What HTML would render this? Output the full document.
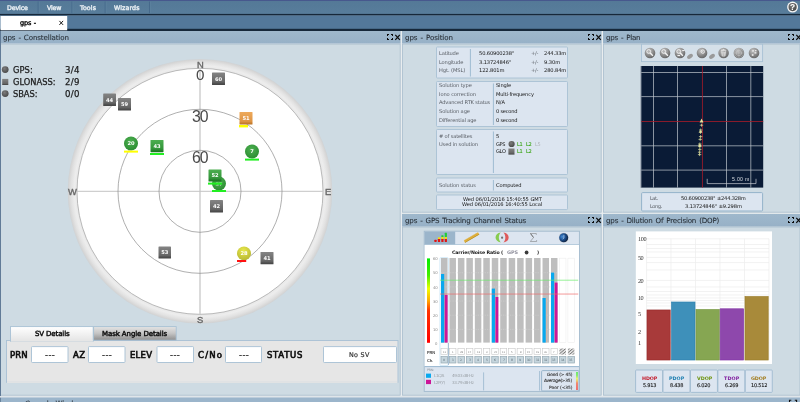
<!DOCTYPE html>
<html lang="en">
<head>
<meta charset="utf-8">
<title>gps</title>
<style>
html,body{margin:0;padding:0}
body{width:800px;height:402px;overflow:hidden;background:#cedbe3;position:relative;font-family:'DejaVu Sans','Liberation Sans',sans-serif}
#app{position:absolute;left:0;top:0;width:800px;height:402px;overflow:hidden}
#g{position:absolute;left:0;top:0;will-change:transform}
.t{position:absolute;white-space:pre;will-change:transform;font-family:'DejaVu Sans','Liberation Sans',sans-serif}
.l{font-family:'Liberation Sans','DejaVu Sans',sans-serif}
.s{font-family:'Liberation Serif','DejaVu Serif',serif}
</style>
</head>
<body>
<div id="app">
<svg id="g" width="800" height="402" viewBox="0 0 800 402">
<defs>
<linearGradient id="gTitle" x1="0" y1="0" x2="0" y2="1"><stop offset="0" stop-color="#9fb8cc"/><stop offset="1" stop-color="#97b1c7"/></linearGradient>
<linearGradient id="gMenu" x1="0" y1="0" x2="0" y2="1"><stop offset="0" stop-color="#547997"/><stop offset="1" stop-color="#587d9b"/></linearGradient>
<radialGradient id="gRing" cx="200" cy="191.3" r="132.5" gradientUnits="userSpaceOnUse">
<stop offset="0.928" stop-color="#e8e8e8"/><stop offset="0.948" stop-color="#ededed"/><stop offset="0.972" stop-color="#e2e2e2"/><stop offset="0.99" stop-color="#d6d6d6"/><stop offset="1" stop-color="#cdd1d4"/></radialGradient>
<linearGradient id="gGray" x1="0" y1="0" x2="0" y2="1"><stop offset="0" stop-color="#848484"/><stop offset="0.75" stop-color="#656565"/><stop offset="0.88" stop-color="#505050"/><stop offset="1" stop-color="#444444"/></linearGradient>
<linearGradient id="gGreen" x1="0" y1="0" x2="0" y2="1"><stop offset="0" stop-color="#4cae50"/><stop offset="0.72" stop-color="#33953a"/><stop offset="0.86" stop-color="#23802a"/><stop offset="1" stop-color="#1a6e20"/></linearGradient>
<linearGradient id="gOrange" x1="0" y1="0" x2="0" y2="1"><stop offset="0" stop-color="#eeaa5c"/><stop offset="0.75" stop-color="#de9444"/><stop offset="0.9" stop-color="#c67e30"/><stop offset="1" stop-color="#b87226"/></linearGradient>
<radialGradient id="gGreenC" cx="0.45" cy="0.35" r="0.7"><stop offset="0" stop-color="#4cb050"/><stop offset="1" stop-color="#2a8a30"/></radialGradient>
<radialGradient id="gYelC" cx="0.45" cy="0.3" r="0.75"><stop offset="0" stop-color="#e8e84a"/><stop offset="1" stop-color="#b4b432"/></radialGradient>
<radialGradient id="gDot" cx="0.4" cy="0.35" r="0.7"><stop offset="0" stop-color="#7c7c7c"/><stop offset="1" stop-color="#484848"/></radialGradient>
<radialGradient id="gSph" cx="0.4" cy="0.3" r="0.8"><stop offset="0" stop-color="#c6c6c6"/><stop offset="0.5" stop-color="#8e8e8e"/><stop offset="1" stop-color="#5a5a5a"/></radialGradient>
<linearGradient id="gTab1" x1="0" y1="0" x2="0" y2="1"><stop offset="0" stop-color="#ffffff"/><stop offset="1" stop-color="#e4e4e4"/></linearGradient>
<linearGradient id="gTab2" x1="0" y1="0" x2="0" y2="1"><stop offset="0" stop-color="#e4e4e4"/><stop offset="0.5" stop-color="#c4c4c4"/><stop offset="1" stop-color="#8e8e8e"/></linearGradient>
<linearGradient id="gCN" x1="0" y1="0" x2="0" y2="1"><stop offset="0" stop-color="#00ee00"/><stop offset="0.2" stop-color="#44ee00"/><stop offset="0.36" stop-color="#eeff00"/><stop offset="0.5" stop-color="#ffaa00"/><stop offset="0.62" stop-color="#ff3300"/><stop offset="1" stop-color="#ff0000"/></linearGradient>
<radialGradient id="gClock" cx="0.35" cy="0.4" r="0.75"><stop offset="0" stop-color="#4a90d8"/><stop offset="0.45" stop-color="#1c4f90"/><stop offset="1" stop-color="#0a1428"/></radialGradient>
<pattern id="hatch" width="2.3" height="2.3" patternUnits="userSpaceOnUse" patternTransform="rotate(-40)"><rect width="2.3" height="2.3" fill="#ececec"/><rect width="2.3" height="0.95" fill="#7a7a7a"/></pattern>
</defs>
<rect x="0" y="0" width="800" height="402" fill="#cedbe3" />
<rect x="0" y="0" width="800" height="1.2" fill="#48588e" />
<rect x="0" y="1" width="800" height="13" fill="url(#gMenu)" />
<rect x="0" y="0" width="800" height="0.9" fill="#48588e" />
<rect x="0" y="13.9" width="800" height="1.8" fill="#16283a" />
<rect x="0" y="15.5" width="800" height="14.1" fill="#53789a" />
<rect x="0" y="28.8" width="800" height="2.2" fill="#16283a" />
<rect x="0.5" y="16" width="66.7" height="14.3" fill="#ffffff" />
<line x1="38.2" y1="1.5" x2="38.2" y2="13.3" stroke="#45688a" stroke-width="1" />
<line x1="39.1" y1="1.5" x2="39.1" y2="13.3" stroke="#5f84a1" stroke-width="0.6" />
<line x1="72" y1="1.5" x2="72" y2="13.3" stroke="#45688a" stroke-width="1" />
<line x1="72.9" y1="1.5" x2="72.9" y2="13.3" stroke="#5f84a1" stroke-width="0.6" />
<line x1="105.2" y1="1.5" x2="105.2" y2="13.3" stroke="#45688a" stroke-width="1" />
<line x1="106.1" y1="1.5" x2="106.1" y2="13.3" stroke="#5f84a1" stroke-width="0.6" />
<line x1="149.6" y1="1.5" x2="149.6" y2="13.3" stroke="#45688a" stroke-width="1" />
<line x1="150.5" y1="1.5" x2="150.5" y2="13.3" stroke="#5f84a1" stroke-width="0.6" />
<circle cx="792.6" cy="7.1" r="5.5" fill="#f6f6f6"/><circle cx="792.6" cy="7.1" r="4.1" fill="url(#gDot)"/>
<path d="M59.4 20.9L63.1 24.9M63.1 20.9L59.4 24.9" stroke="#1a1a1a" stroke-width="1" fill="none"/>
<rect x="0" y="31" width="800" height="366.6" fill="#e9edef" />
<rect x="0" y="31" width="400.6" height="12.3" fill="url(#gTitle)" />
<rect x="0" y="43.2" width="400.6" height="0.9" fill="#b4c8d7" />
<rect x="0.4" y="44.1" width="399.8" height="351.1" fill="#cedbe3" stroke="#a9bdcc" stroke-width="0.8" />
<path d="M387 34h2v1h-1v1h-1ZM393 34h-2v1h1v1h1ZM387 40h2v-1h-1v-1h-1ZM393 40h-2v-1h1v-1h1Z" fill="#0c0c0c"/>
<path d="M395.3 34.8L399.8 39.8M399.8 34.8L395.3 39.8" stroke="#0c0c0c" stroke-width="1.25" fill="none"/>
<rect x="402" y="31" width="199.6" height="12.3" fill="url(#gTitle)" />
<rect x="402" y="43.2" width="199.6" height="0.9" fill="#b4c8d7" />
<rect x="402.4" y="44.1" width="198.8" height="168.1" fill="#cedbe3" stroke="#a9bdcc" stroke-width="0.8" />
<path d="M588 34h2v1h-1v1h-1ZM594 34h-2v1h1v1h1ZM588 40h2v-1h-1v-1h-1ZM594 40h-2v-1h1v-1h1Z" fill="#0c0c0c"/>
<path d="M596.3 34.8L600.8 39.8M600.8 34.8L596.3 39.8" stroke="#0c0c0c" stroke-width="1.25" fill="none"/>
<rect x="603" y="31" width="197.4" height="12.3" fill="url(#gTitle)" />
<rect x="603" y="43.2" width="197.4" height="0.9" fill="#b4c8d7" />
<rect x="603.4" y="44.1" width="196.6" height="168.1" fill="#cedbe3" stroke="#a9bdcc" stroke-width="0.8" />
<path d="M788 34h2v1h-1v1h-1ZM794 34h-2v1h1v1h1ZM788 40h2v-1h-1v-1h-1ZM794 40h-2v-1h1v-1h1Z" fill="#0c0c0c"/>
<path d="M796.3 34.8L800.8 39.8M800.8 34.8L796.3 39.8" stroke="#0c0c0c" stroke-width="1.25" fill="none"/>
<rect x="402" y="213.9" width="199.6" height="12.3" fill="url(#gTitle)" />
<rect x="402" y="226.1" width="199.6" height="0.9" fill="#b4c8d7" />
<rect x="402.4" y="227" width="198.8" height="168.2" fill="#cedbe3" stroke="#a9bdcc" stroke-width="0.8" />
<path d="M588 217h2v1h-1v1h-1ZM594 217h-2v1h1v1h1ZM588 223h2v-1h-1v-1h-1ZM594 223h-2v-1h1v-1h1Z" fill="#0c0c0c"/>
<path d="M596.3 217.8L600.8 222.8M600.8 217.8L596.3 222.8" stroke="#0c0c0c" stroke-width="1.25" fill="none"/>
<rect x="603" y="213.9" width="197.4" height="12.3" fill="url(#gTitle)" />
<rect x="603" y="226.1" width="197.4" height="0.9" fill="#b4c8d7" />
<rect x="603.4" y="227" width="196.6" height="168.2" fill="#cedbe3" stroke="#a9bdcc" stroke-width="0.8" />
<path d="M788 217h2v1h-1v1h-1ZM794 217h-2v1h1v1h1ZM788 223h2v-1h-1v-1h-1ZM794 223h-2v-1h1v-1h1Z" fill="#0c0c0c"/>
<path d="M796.3 217.8L800.8 222.8M800.8 217.8L796.3 222.8" stroke="#0c0c0c" stroke-width="1.25" fill="none"/>
<rect x="0" y="31" width="0.9" height="371" fill="#587390" />
<rect x="0" y="396" width="800" height="1.6" fill="#dfe5e9" />
<rect x="0.9" y="397.5" width="799.1" height="4.5" fill="#9bb5cb" />
<path d="M789.5 402L789.5 400.3L791.3 400.3M794.8 400.3L796.6 400.3L796.6 402" stroke="#111" stroke-width="1.1" fill="none"/>
<circle cx="200" cy="191.3" r="132.3" fill="url(#gRing)"/>
<circle cx="200" cy="191.3" r="123" fill="#fff" stroke="#a6a6a6" stroke-width="0.75"/>
<line x1="200" y1="68.5" x2="200" y2="314.3" stroke="#c8c8c8" stroke-width="1.3" />
<line x1="77" y1="191.3" x2="323" y2="191.3" stroke="#c4c4c4" stroke-width="1" />
<circle cx="200" cy="191.3" r="82" fill="none" stroke="#8c8c8c" stroke-width="0.7"/>
<circle cx="200" cy="191.3" r="41" fill="none" stroke="#8c8c8c" stroke-width="0.7"/>
<rect x="103.2" y="93.5" width="12.8" height="12.5" fill="url(#gGray)" rx="0.6" />
<text x="106" y="101.65" font-family="'DejaVu Sans','Liberation Sans',sans-serif" font-size="5.2" font-weight="bold" fill="#fff" textLength="7.2" lengthAdjust="spacingAndGlyphs" >44</text>
<rect x="118" y="98" width="13" height="12.5" fill="url(#gGray)" rx="0.6" />
<text x="120.9" y="106.15" font-family="'DejaVu Sans','Liberation Sans',sans-serif" font-size="5.2" font-weight="bold" fill="#fff" textLength="7.2" lengthAdjust="spacingAndGlyphs" >59</text>
<rect x="212" y="72.5" width="13" height="12.5" fill="url(#gGray)" rx="0.6" />
<text x="214.9" y="80.65" font-family="'DejaVu Sans','Liberation Sans',sans-serif" font-size="5.2" font-weight="bold" fill="#fff" textLength="7.2" lengthAdjust="spacingAndGlyphs" >60</text>
<rect x="210" y="200" width="13" height="12.5" fill="url(#gGray)" rx="0.6" />
<text x="212.9" y="208.15" font-family="'DejaVu Sans','Liberation Sans',sans-serif" font-size="5.2" font-weight="bold" fill="#fff" textLength="7.2" lengthAdjust="spacingAndGlyphs" >42</text>
<rect x="158.5" y="246.5" width="12.5" height="12" fill="url(#gGray)" rx="0.6" />
<text x="161.15" y="254.4" font-family="'DejaVu Sans','Liberation Sans',sans-serif" font-size="5.2" font-weight="bold" fill="#fff" textLength="7.2" lengthAdjust="spacingAndGlyphs" >53</text>
<rect x="260.5" y="252" width="13" height="12.3" fill="url(#gGray)" rx="0.6" />
<text x="263.4" y="260.05" font-family="'DejaVu Sans','Liberation Sans',sans-serif" font-size="5.2" font-weight="bold" fill="#fff" textLength="7.2" lengthAdjust="spacingAndGlyphs" >41</text>
<circle cx="131" cy="143.5" r="7" fill="url(#gGreenC)"/>
<rect x="124" y="150.6" width="14" height="2" fill="#ffff00" />
<text x="127.4" y="145.4" font-family="'DejaVu Sans','Liberation Sans',sans-serif" font-size="5.2" font-weight="bold" fill="#fff" textLength="7.2" lengthAdjust="spacingAndGlyphs" >20</text>
<rect x="150.5" y="140" width="13" height="12.2" fill="url(#gGreen)" rx="0.6" />
<rect x="150" y="153" width="14" height="2" fill="#22ee22" />
<text x="153.4" y="148" font-family="'DejaVu Sans','Liberation Sans',sans-serif" font-size="5.2" font-weight="bold" fill="#fff" textLength="7.2" lengthAdjust="spacingAndGlyphs" >43</text>
<rect x="239.5" y="112" width="13" height="12.5" fill="url(#gOrange)" rx="0.6" />
<rect x="239" y="125" width="9" height="2.4" fill="#ffff00" />
<text x="242.4" y="120.15" font-family="'DejaVu Sans','Liberation Sans',sans-serif" font-size="5.2" font-weight="bold" fill="#fff" textLength="7.2" lengthAdjust="spacingAndGlyphs" >51</text>
<circle cx="252" cy="151.5" r="7" fill="url(#gGreenC)"/>
<rect x="245" y="158.6" width="14" height="2" fill="#22ee22" />
<text x="250.2" y="153.4" font-family="'DejaVu Sans','Liberation Sans',sans-serif" font-size="5.2" font-weight="bold" fill="#fff" textLength="3.6" lengthAdjust="spacingAndGlyphs" >7</text>
<circle cx="219" cy="183.6" r="7" fill="url(#gGreenC)"/>
<rect x="212" y="190" width="14" height="2" fill="#22ee22" />
<text x="215.4" y="185.5" font-family="'DejaVu Sans','Liberation Sans',sans-serif" font-size="5.2" font-weight="bold" fill="#fff" textLength="7.2" lengthAdjust="spacingAndGlyphs" opacity="0.45">37</text>
<rect x="208.5" y="169.5" width="13" height="12.1" fill="url(#gGreen)" rx="0.6" />
<rect x="208" y="182.6" width="14" height="2" fill="#22ee22" />
<text x="211.4" y="177.45" font-family="'DejaVu Sans','Liberation Sans',sans-serif" font-size="5.2" font-weight="bold" fill="#fff" textLength="7.2" lengthAdjust="spacingAndGlyphs" >52</text>
<circle cx="244" cy="253.4" r="7" fill="url(#gYelC)"/>
<rect x="237" y="260" width="9.2" height="2" fill="#ff1111" />
<text x="240.4" y="255.3" font-family="'DejaVu Sans','Liberation Sans',sans-serif" font-size="5.2" font-weight="bold" fill="#fff" textLength="7.2" lengthAdjust="spacingAndGlyphs" >28</text>
<circle cx="5.2" cy="69.6" r="3.4" fill="url(#gDot)"/>
<rect x="2.2" y="78.9" width="6.1" height="6.1" fill="url(#gGray)" />
<circle cx="5.2" cy="93.6" r="3.4" fill="url(#gDot)"/>
<rect x="6.5" y="340.5" width="391.5" height="41.8" fill="#e6e6e6" stroke="#a8c1d4" stroke-width="0.9" />
<rect x="10.5" y="326.6" width="82.7" height="14.6" fill="url(#gTab1)" stroke="#a8c1d4" stroke-width="0.9" />
<rect x="93.6" y="326.6" width="82.6" height="13.6" fill="url(#gTab2)" stroke="#a8c1d4" stroke-width="0.9" />
<rect x="11" y="340" width="81.8" height="1.6" fill="#e6e6e6" />
<rect x="7" y="381.6" width="390.5" height="1.3" fill="#e6e6e6" />
<rect x="31.5" y="346.6" width="36.5" height="15.9" fill="#fff" stroke="#a6c0d4" stroke-width="0.9" rx="0.8" />
<rect x="88.5" y="346.6" width="36.5" height="15.9" fill="#fff" stroke="#a6c0d4" stroke-width="0.9" rx="0.8" />
<rect x="157" y="346.6" width="36.5" height="15.9" fill="#fff" stroke="#a6c0d4" stroke-width="0.9" rx="0.8" />
<rect x="225.5" y="346.6" width="36" height="15.9" fill="#fff" stroke="#a6c0d4" stroke-width="0.9" rx="0.8" />
<rect x="323.5" y="346.6" width="73" height="15.9" fill="#fff" stroke="#a6c0d4" stroke-width="0.9" rx="0.8" />
<rect x="436.5" y="47" width="131" height="31" fill="#dce5f0" stroke="#a8c1d4" stroke-width="0.9" rx="0.8" />
<line x1="470.4" y1="49" x2="470.4" y2="76.5" stroke="#8fb0c9" stroke-width="0.8" />
<rect x="436.5" y="81.5" width="131" height="45" fill="#dce5f0" stroke="#a8c1d4" stroke-width="0.9" rx="0.8" />
<line x1="493.4" y1="83.5" x2="493.4" y2="125" stroke="#8fb0c9" stroke-width="0.8" />
<rect x="436.5" y="129.5" width="131" height="45" fill="#dce5f0" stroke="#a8c1d4" stroke-width="0.9" rx="0.8" />
<line x1="493.4" y1="131.5" x2="493.4" y2="173" stroke="#8fb0c9" stroke-width="0.8" />
<rect x="436.5" y="178" width="131" height="14" fill="#dce5f0" stroke="#a8c1d4" stroke-width="0.9" rx="0.8" />
<line x1="493.4" y1="180" x2="493.4" y2="190.5" stroke="#8fb0c9" stroke-width="0.8" />
<rect x="436.5" y="195" width="131" height="14.6" fill="#dce5f0" stroke="#a8c1d4" stroke-width="0.9" rx="0.8" />
<circle cx="511.6" cy="144" r="3.1" fill="url(#gDot)"/>
<rect x="508.4" y="148.5" width="6.1" height="6.1" fill="url(#gGray)" />
<rect x="641.5" y="44.2" width="121.1" height="17.4" fill="#d5e0e9" stroke="#a8c1d4" stroke-width="0.9" />
<circle cx="650" cy="53" r="5.3" fill="url(#gSph)"/>
<circle cx="665" cy="53" r="5.3" fill="url(#gSph)"/>
<circle cx="680" cy="53" r="5.3" fill="url(#gSph)"/>
<circle cx="702" cy="53" r="5.3" fill="url(#gSph)"/>
<circle cx="723.6" cy="53" r="5.3" fill="url(#gSph)"/>
<circle cx="738.9" cy="53" r="5.3" fill="url(#gSph)"/>
<circle cx="754" cy="53" r="5.3" fill="url(#gSph)"/>
<ellipse cx="690" cy="56.3" rx="3.2" ry="2" fill="#9a9a9a" transform="rotate(-35 690 56.3)"/>
<ellipse cx="712" cy="56.3" rx="3.2" ry="2" fill="#9a9a9a" transform="rotate(-35 712 56.3)"/>
<circle cx="648.7" cy="51.5" r="1.9" fill="#b4b4b4" stroke="#f2f2f2" stroke-width="0.9"/><path d="M650.2 53.1L652.9 55.7" stroke="#f4f4f4" stroke-width="1.4"/>
<circle cx="663.7" cy="51.5" r="1.9" fill="#b4b4b4" stroke="#f2f2f2" stroke-width="0.9"/><path d="M665.2 53.1L667.9 55.7" stroke="#f4f4f4" stroke-width="1.4"/>
<circle cx="678.7" cy="51.5" r="1.9" fill="#b4b4b4" stroke="#f2f2f2" stroke-width="0.9"/><path d="M680.2 53.1L682.9 55.7" stroke="#f4f4f4" stroke-width="1.4"/>
<path d="M682.2 50.6h2.4M677.4 55.6h2.6" stroke="#fafafa" stroke-width="1"/>
<circle cx="702.8" cy="51.6" r="1.7" fill="none" stroke="#f0f0f0" stroke-width="0.9"/><circle cx="702.8" cy="51.6" r="0.5" fill="#f0f0f0"/>
<path d="M721 50.3h5.2M721.7 51.4l0.5 4.6h2.8l0.5 -4.6M723 52v3.4M724.3 52v3.4M722.8 49.5h1.6" stroke="#f0f0f0" stroke-width="0.7" fill="none"/>
<path d="M738.9 49.2v7.6M735.1 53h7.6" stroke="#c4c4c4" stroke-width="0.6"/><circle cx="738.9" cy="53" r="2.7" fill="none" stroke="#c4c4c4" stroke-width="0.6"/><circle cx="738.9" cy="53" r="4.4" fill="none" stroke="#bdbdbd" stroke-width="0.5"/>
<path d="M751.8 55h1.7M754.5 52.9h1.9M752.3 50.9h1.5M755.2 50.6h1.2" stroke="#f6f6f6" stroke-width="1.3"/>
<rect x="640.6" y="66" width="122.6" height="121.6" fill="#0a1b36" />
<rect x="640.6" y="66" width="0.65" height="121.6" fill="#e8eef2" />
<line x1="653.5" y1="66" x2="653.5" y2="187.6" stroke="#c2c8d0" stroke-width="0.7" />
<line x1="677.5" y1="66" x2="677.5" y2="187.6" stroke="#c2c8d0" stroke-width="0.7" />
<line x1="726.5" y1="66" x2="726.5" y2="187.6" stroke="#c2c8d0" stroke-width="0.7" />
<line x1="750.8" y1="66" x2="750.8" y2="187.6" stroke="#c2c8d0" stroke-width="0.7" />
<line x1="641.25" y1="72.5" x2="763.2" y2="72.5" stroke="#c2c8d0" stroke-width="0.7" />
<line x1="641.25" y1="96.6" x2="763.2" y2="96.6" stroke="#c2c8d0" stroke-width="0.7" />
<line x1="641.25" y1="145.8" x2="763.2" y2="145.8" stroke="#c2c8d0" stroke-width="0.7" />
<line x1="641.25" y1="170.1" x2="763.2" y2="170.1" stroke="#c2c8d0" stroke-width="0.7" />
<line x1="702.45" y1="66" x2="702.45" y2="187.6" stroke="#a81c28" stroke-width="0.8" />
<line x1="641.25" y1="121.5" x2="763.2" y2="121.5" stroke="#a81c28" stroke-width="0.8" />
<path d="M701.6 118.6L703.4 122.6L699.6 122.6Z" fill="#e6e6a0"/>
<path d="M699.8 125.2h3.4M701.5 123.7v3M699 130h3.4M700.7 128.5v3M698.8 132.4h3.4M700.5 130.9v3M698.9 136.6h3.4M700.6 135.1v3M698.5 139.4h3.4M700.2 137.9v3M698.1 144h3.4M699.8 142.5v3M698.1 146.6h3.4M699.8 145.1v3M698.1 149.4h3.4M699.8 147.9v3M697.9 152.2h3.4M699.6 150.7v3M697.9 154.6h3.4M699.6 153.1v3" stroke="#e6e6a0" stroke-width="0.7" fill="none"/>
<circle cx="700.6" cy="131.6" r="1.2" fill="#e6e6a0"/><circle cx="699.8" cy="145.6" r="1.3" fill="#e6e6a0"/>
<path d="M707.2 178.8V183.6H756V178.8" stroke="#c8ccd2" stroke-width="0.7" fill="none"/>
<rect x="641.6" y="192.6" width="121" height="18.4" fill="#dce5f0" stroke="#94b3ca" stroke-width="1" rx="1" />
<rect x="424.2" y="231.2" width="155.2" height="160.2" fill="#dce5f0" stroke="#a2bacd" stroke-width="0.9" />
<rect x="424.6" y="231.6" width="30.6" height="13" fill="#9bb5cb" />
<line x1="424.6" y1="244.6" x2="579" y2="244.6" stroke="#a8c1d4" stroke-width="0.8" />
<rect x="434.4" y="239.85" width="2.2" height="2.15" fill="#e01414" rx="0.5" />
<rect x="437.85" y="238.85" width="2.2" height="3.15" fill="#e01414" rx="0.5" />
<rect x="437.85" y="237.35" width="2.2" height="1.65" fill="#f2de10" rx="0.5" />
<rect x="441.3" y="238.85" width="2.2" height="3.15" fill="#e01414" rx="0.5" />
<rect x="441.3" y="236.85" width="2.2" height="2.15" fill="#f2de10" rx="0.5" />
<rect x="441.3" y="235.15" width="2.2" height="1.85" fill="#22cc3a" rx="0.5" />
<rect x="444.75" y="238.85" width="2.2" height="3.15" fill="#e01414" rx="0.5" />
<rect x="444.75" y="236.85" width="2.2" height="2.15" fill="#f2de10" rx="0.5" />
<rect x="444.75" y="232.85" width="2.2" height="4.15" fill="#22cc3a" rx="0.5" />
<g transform="rotate(-30 471.5 237.5)"><rect x="463.3" y="236.3" width="16.4" height="2.5" fill="#e2b23e"/><rect x="463.3" y="238.3" width="16.4" height="0.6" fill="#b08a24"/><path d="M465 236.3v1M467 236.3v1M469 236.3v1M471 236.3v1M473 236.3v1M475 236.3v1M477 236.3v1" stroke="#b08a24" stroke-width="0.35"/></g>
<path d="M500.8 232.6C493.8 233.4 493.8 241.6 500.8 242.4C498.2 240 498.2 235 500.8 232.6Z" fill="#86cc50"/>
<path d="M503.4 232.6C510.4 233.4 510.4 241.6 503.4 242.4C506 240 506 235 503.4 232.6Z" fill="#de5a5a"/>
<circle cx="502.1" cy="237.7" r="1.1" fill="#707070"/>
<path d="M536.3 234.9V233.5H530.5L533.5 237.5L530.3 241.5H536.6V240.1" stroke="#707070" stroke-width="0.5" fill="none"/><path d="M530.5 233.5L533.5 237.5" stroke="#707070" stroke-width="0.9" fill="none"/>
<circle cx="563.7" cy="237.7" r="4.9" fill="#c8ccd0"/><circle cx="563.7" cy="237.7" r="4.5" fill="url(#gClock)"/><path d="M563.9 234.8V238L562.6 239.3" stroke="#dfe9f5" stroke-width="0.55" fill="none"/>
<rect x="424.6" y="245" width="154.4" height="121.4" fill="#ffffff" />
<circle cx="526.6" cy="252.5" r="1.9" fill="#3a3a3a"/>
<rect x="427" y="258.4" width="3" height="84.4" fill="url(#gCN)" />
<rect x="439.9" y="257.6" width="8.5" height="108" fill="#fafdff" stroke="#c4e2f6" stroke-width="0.7" rx="1.2" />
<rect x="441" y="258" width="6.5" height="84.6" fill="#bebebe" />
<rect x="449.46" y="258" width="6.5" height="84.6" fill="#bebebe" />
<rect x="457.92" y="258" width="6.5" height="84.6" fill="#bebebe" />
<rect x="466.38" y="258" width="6.5" height="84.6" fill="#bebebe" />
<rect x="474.84" y="258" width="6.5" height="84.6" fill="#bebebe" />
<rect x="483.3" y="258" width="6.5" height="84.6" fill="#bebebe" />
<rect x="491.76" y="258" width="6.5" height="84.6" fill="#bebebe" />
<rect x="500.22" y="258" width="6.5" height="84.6" fill="#bebebe" />
<rect x="508.68" y="258" width="6.5" height="84.6" fill="#bebebe" />
<rect x="517.14" y="258" width="6.5" height="84.6" fill="#bebebe" />
<rect x="525.6" y="258" width="6.5" height="84.6" fill="#bebebe" />
<rect x="534.06" y="258" width="6.5" height="84.6" fill="#bebebe" />
<rect x="542.52" y="258" width="6.5" height="84.6" fill="#bebebe" />
<rect x="550.98" y="258" width="6.5" height="84.6" fill="#bebebe" />
<rect x="559.44" y="258.2" width="6.5" height="84.4" fill="#ffffff" stroke="#ededed" stroke-width="0.6" />
<rect x="567.9" y="258.2" width="6.5" height="84.4" fill="#ffffff" stroke="#ededed" stroke-width="0.6" />
<path d="M441 272.75H558M441 286.9H558M441 301.05H558M441 315.2H558M441 329.35H558" stroke="#d6d6d6" stroke-width="0.5" stroke-dasharray="1.2 1.1" fill="none"/>
<rect x="441" y="274" width="3.2" height="68.6" fill="#08a8ee" />
<rect x="444.7" y="295" width="2.9" height="47.6" fill="#cc1698" />
<rect x="491.76" y="288.6" width="3.2" height="54" fill="#08a8ee" />
<rect x="495.46" y="297" width="2.9" height="45.6" fill="#cc1698" />
<rect x="542.52" y="298" width="3.2" height="44.6" fill="#08a8ee" />
<line x1="546.6" y1="298" x2="546.6" y2="342.6" stroke="#e8b090" stroke-width="0.5" />
<rect x="550.98" y="272.6" width="3.2" height="70" fill="#08a8ee" />
<rect x="554.68" y="282.6" width="2.9" height="60" fill="#cc1698" />
<rect x="440" y="279.6" width="138.2" height="1.3" fill="#6aee6a" opacity="0.52"/>
<rect x="440" y="293.4" width="138.2" height="1.3" fill="#f06a6a" opacity="0.52"/>
<line x1="448.4" y1="343" x2="448.4" y2="365" stroke="#8ca8c0" stroke-width="0.7" />
<rect x="441" y="348.5" width="6.5" height="6.1" fill="#ffffff" stroke="#c8c8c8" stroke-width="0.6" />
<rect x="441" y="356.6" width="6.5" height="6.4" fill="#c6d6de" stroke="#94a8b3" stroke-width="0.7" />
<rect x="449.46" y="348.5" width="6.5" height="6.1" fill="#ffffff" stroke="#c8c8c8" stroke-width="0.6" />
<rect x="449.46" y="356.6" width="6.5" height="6.4" fill="#c6d6de" stroke="#94a8b3" stroke-width="0.7" />
<rect x="457.92" y="348.5" width="6.5" height="6.1" fill="#ffffff" stroke="#c8c8c8" stroke-width="0.6" />
<rect x="457.92" y="356.6" width="6.5" height="6.4" fill="#c6d6de" stroke="#94a8b3" stroke-width="0.7" />
<rect x="466.38" y="348.5" width="6.5" height="6.1" fill="#ffffff" stroke="#c8c8c8" stroke-width="0.6" />
<rect x="466.38" y="356.6" width="6.5" height="6.4" fill="#c6d6de" stroke="#94a8b3" stroke-width="0.7" />
<rect x="474.84" y="348.5" width="6.5" height="6.1" fill="#ffffff" stroke="#c8c8c8" stroke-width="0.6" />
<rect x="474.84" y="356.6" width="6.5" height="6.4" fill="#c6d6de" stroke="#94a8b3" stroke-width="0.7" />
<rect x="483.3" y="348.5" width="6.5" height="6.1" fill="#ffffff" stroke="#c8c8c8" stroke-width="0.6" />
<rect x="483.3" y="356.6" width="6.5" height="6.4" fill="#c6d6de" stroke="#94a8b3" stroke-width="0.7" />
<rect x="491.76" y="348.5" width="6.5" height="6.1" fill="#ffffff" stroke="#c8c8c8" stroke-width="0.6" />
<rect x="491.76" y="356.6" width="6.5" height="6.4" fill="#c6d6de" stroke="#94a8b3" stroke-width="0.7" />
<rect x="500.22" y="348.5" width="6.5" height="6.1" fill="#ffffff" stroke="#c8c8c8" stroke-width="0.6" />
<rect x="500.22" y="356.6" width="6.5" height="6.4" fill="#c6d6de" stroke="#94a8b3" stroke-width="0.7" />
<rect x="508.68" y="348.5" width="6.5" height="6.1" fill="#ffffff" stroke="#c8c8c8" stroke-width="0.6" />
<rect x="508.68" y="356.6" width="6.5" height="6.4" fill="#c6d6de" stroke="#94a8b3" stroke-width="0.7" />
<rect x="517.14" y="348.5" width="6.5" height="6.1" fill="#ffffff" stroke="#c8c8c8" stroke-width="0.6" />
<rect x="517.14" y="356.6" width="6.5" height="6.4" fill="#c6d6de" stroke="#94a8b3" stroke-width="0.7" />
<rect x="525.6" y="348.5" width="6.5" height="6.1" fill="#ffffff" stroke="#c8c8c8" stroke-width="0.6" />
<rect x="525.6" y="356.6" width="6.5" height="6.4" fill="#c6d6de" stroke="#94a8b3" stroke-width="0.7" />
<rect x="534.06" y="348.5" width="6.5" height="6.1" fill="#ffffff" stroke="#c8c8c8" stroke-width="0.6" />
<rect x="534.06" y="356.6" width="6.5" height="6.4" fill="#c6d6de" stroke="#94a8b3" stroke-width="0.7" />
<rect x="542.52" y="348.5" width="6.5" height="6.1" fill="#ffffff" stroke="#c8c8c8" stroke-width="0.6" />
<rect x="542.52" y="356.6" width="6.5" height="6.4" fill="#c6d6de" stroke="#94a8b3" stroke-width="0.7" />
<rect x="550.98" y="348.5" width="6.5" height="6.1" fill="#ffffff" stroke="#c8c8c8" stroke-width="0.6" />
<rect x="550.98" y="356.6" width="6.5" height="6.4" fill="#c6d6de" stroke="#94a8b3" stroke-width="0.7" />
<rect x="559.44" y="348.5" width="6.5" height="6.1" fill="url(#hatch)" />
<rect x="559.44" y="356.6" width="6.5" height="6.4" fill="#c6d6de" stroke="#94a8b3" stroke-width="0.7" />
<rect x="567.9" y="348.5" width="6.5" height="6.1" fill="url(#hatch)" />
<rect x="567.9" y="356.6" width="6.5" height="6.4" fill="#c6d6de" stroke="#94a8b3" stroke-width="0.7" />
<line x1="424.6" y1="366.6" x2="579" y2="366.6" stroke="#8fb0c9" stroke-width="0.9" />
<rect x="426" y="373.6" width="5" height="4.2" fill="#08a8ee" />
<rect x="426" y="379.8" width="5" height="4.3" fill="#cc1698" />
<line x1="483.6" y1="372.4" x2="483.6" y2="390.4" stroke="#8fb0c9" stroke-width="0.7" />
<line x1="539.6" y1="371" x2="539.6" y2="390.6" stroke="#8fb0c9" stroke-width="0.7" />
<rect x="541.6" y="370.6" width="37.4" height="20.4" fill="#dce5f0" stroke="#98b4ca" stroke-width="1" rx="1" />
<rect x="576.3" y="372" width="1.4" height="18" fill="url(#gCN)" opacity="0.75"/>
<rect x="635.8" y="231.4" width="136.2" height="132.6" fill="#ffffff" />
<path d="M646.6 238.8H769M646.6 244.5H769M646.6 248.5H769M646.6 252H769M646.6 257.4H769M646.6 262.6H769M646.6 270H769M646.6 280.4H769M646.6 287H769M646.6 291.5H769M646.6 295H769M646.6 298H769M646.6 300.5H769M646.6 303H769M646.6 306H769M646.6 309.6H769M646.6 314H769M646.6 322H769M646.6 332H769M646.6 343H769M646.6 238.8V360M671 238.8V360M695.5 238.8V360M720 238.8V360M744.5 238.8V360M769 238.8V360" stroke="#ececec" stroke-width="0.7" fill="none"/>
<rect x="647" y="310" width="23.2" height="50" fill="#a83a3a" stroke="#9c2c2c" stroke-width="0.7" />
<rect x="671.6" y="302" width="23.4" height="58" fill="#3e90ba" stroke="#2f82ae" stroke-width="0.7" />
<rect x="696" y="309.6" width="23.3" height="50.4" fill="#86a652" stroke="#7a9a44" stroke-width="0.7" />
<rect x="720.2" y="308.8" width="23.4" height="51.2" fill="#8e48ac" stroke="#8438a8" stroke-width="0.7" />
<rect x="745" y="296.6" width="23.2" height="63.4" fill="#a88a3a" stroke="#9c7e2c" stroke-width="0.7" />
<rect x="635.6" y="370" width="27" height="22.4" fill="#dce5f0" stroke="#9fbacf" stroke-width="0.9" rx="0.8" />
<rect x="663.02" y="370" width="27" height="22.4" fill="#dce5f0" stroke="#9fbacf" stroke-width="0.9" rx="0.8" />
<rect x="690.44" y="370" width="27" height="22.4" fill="#dce5f0" stroke="#9fbacf" stroke-width="0.9" rx="0.8" />
<rect x="717.86" y="370" width="27" height="22.4" fill="#dce5f0" stroke="#9fbacf" stroke-width="0.9" rx="0.8" />
<rect x="745.28" y="370" width="27" height="22.4" fill="#dce5f0" stroke="#9fbacf" stroke-width="0.9" rx="0.8" />
</svg>
<span class="t l" style="left:790.20px;top:2px;font-size:8.4px;line-height:10px;height:10px;color:#ffffff;font-weight:bold;">?</span>
<span class="t" style="left:7.00px;top:4px;font-size:6.3px;line-height:7px;height:7px;color:#e8eef3;letter-spacing:-0.109px;-webkit-text-stroke:0.4px #e8eef3;">Device</span>
<span class="t" style="left:46.50px;top:4px;font-size:6.3px;line-height:7px;height:7px;color:#e8eef3;letter-spacing:-0.150px;-webkit-text-stroke:0.4px #e8eef3;">View</span>
<span class="t" style="left:79.50px;top:4px;font-size:6.3px;line-height:7px;height:7px;color:#e8eef3;letter-spacing:0.120px;-webkit-text-stroke:0.4px #e8eef3;">Tools</span>
<span class="t" style="left:113.50px;top:4px;font-size:6.3px;line-height:7px;height:7px;color:#e8eef3;letter-spacing:0.122px;-webkit-text-stroke:0.4px #e8eef3;">Wizards</span>
<span class="t" style="left:20.00px;top:19px;font-size:6.5px;line-height:8px;height:8px;color:#0c0c0c;letter-spacing:-0.163px;word-spacing:0.6px;-webkit-text-stroke:0.38px #0c0c0c;">gps -</span>
<span class="t" style="left:3.00px;top:33px;font-size:7.1px;line-height:9px;height:9px;color:#2a323a;letter-spacing:-0.119px;word-spacing:0.9px;-webkit-text-stroke:0.1px #2a323a;">gps - Constellation</span>
<span class="t" style="left:405.00px;top:33px;font-size:7.1px;line-height:9px;height:9px;color:#2a323a;letter-spacing:-0.095px;word-spacing:0.9px;-webkit-text-stroke:0.1px #2a323a;">gps - Position</span>
<span class="t" style="left:605.60px;top:33px;font-size:7.1px;line-height:9px;height:9px;color:#2a323a;letter-spacing:-0.233px;word-spacing:0.9px;-webkit-text-stroke:0.1px #2a323a;">gps - Plan</span>
<span class="t" style="left:405.00px;top:216px;font-size:7.1px;line-height:9px;height:9px;color:#2a323a;letter-spacing:-0.168px;word-spacing:0.9px;-webkit-text-stroke:0.1px #2a323a;">gps - GPS Tracking Channel Status</span>
<span class="t" style="left:605.60px;top:216px;font-size:7.1px;line-height:9px;height:9px;color:#2a323a;letter-spacing:-0.182px;word-spacing:0.9px;-webkit-text-stroke:0.1px #2a323a;">gps - Dilution Of Precision (DOP)</span>
<span class="t" style="left:25.20px;top:399px;font-size:7.1px;line-height:9px;height:9px;color:#2a323a;-webkit-text-stroke:0.1px #2a323a;">Console Window</span>
<span class="t l" style="left:195.90px;top:66px;font-size:15.2px;line-height:17px;height:17px;color:#4a4a4a;">0</span>
<span class="t l" style="left:191.70px;top:108px;font-size:15.8px;line-height:17px;height:17px;color:#4a4a4a;letter-spacing:-1.075px;">30</span>
<span class="t l" style="left:191.70px;top:149px;font-size:15.8px;line-height:17px;height:17px;color:#4a4a4a;letter-spacing:-1.075px;">60</span>
<span class="t l" style="left:196.80px;top:59px;font-size:9.4px;line-height:11px;height:11px;color:#686868;-webkit-text-stroke:0.4px #686868;">N</span>
<span class="t l" style="left:324.50px;top:186px;font-size:9.4px;line-height:11px;height:11px;color:#686868;-webkit-text-stroke:0.4px #686868;">E</span>
<span class="t l" style="left:197.20px;top:314px;font-size:9.4px;line-height:11px;height:11px;color:#686868;-webkit-text-stroke:0.4px #686868;">S</span>
<span class="t l" style="left:68.00px;top:186px;font-size:9.4px;line-height:11px;height:11px;color:#686868;-webkit-text-stroke:0.4px #686868;">W</span>
<span class="t" style="left:12.50px;top:65px;font-size:8.3px;line-height:10px;height:10px;color:#1a1a1a;letter-spacing:0.066px;-webkit-text-stroke:0.25px #1a1a1a;">GPS:</span>
<span class="t" style="left:65.00px;top:65px;font-size:8.6px;line-height:10px;height:10px;color:#1a1a1a;letter-spacing:0.330px;-webkit-text-stroke:0.25px #1a1a1a;">3/4</span>
<span class="t" style="left:12.50px;top:77px;font-size:8.3px;line-height:10px;height:10px;color:#1a1a1a;-webkit-text-stroke:0.25px #1a1a1a;">GLONASS:</span>
<span class="t" style="left:65.00px;top:77px;font-size:8.6px;line-height:10px;height:10px;color:#1a1a1a;letter-spacing:0.330px;-webkit-text-stroke:0.25px #1a1a1a;">2/9</span>
<span class="t" style="left:12.50px;top:89px;font-size:8.3px;line-height:10px;height:10px;color:#1a1a1a;letter-spacing:-0.051px;-webkit-text-stroke:0.25px #1a1a1a;">SBAS:</span>
<span class="t" style="left:65.00px;top:89px;font-size:8.6px;line-height:10px;height:10px;color:#1a1a1a;letter-spacing:0.330px;-webkit-text-stroke:0.25px #1a1a1a;">0/0</span>
<span class="t" style="left:35.00px;top:330px;font-size:7px;line-height:8px;height:8px;color:#111;letter-spacing:-0.125px;-webkit-text-stroke:0.45px #111;">SV Details</span>
<span class="t" style="left:102.40px;top:330px;font-size:7px;line-height:8px;height:8px;color:#111;letter-spacing:-0.086px;-webkit-text-stroke:0.45px #111;">Mask Angle Details</span>
<span class="t" style="left:9.80px;top:350px;font-size:8.5px;line-height:10px;height:10px;color:#0c0c0c;letter-spacing:0.155px;-webkit-text-stroke:0.6px #0c0c0c;">PRN</span>
<span class="t" style="left:73.00px;top:350px;font-size:8.5px;line-height:10px;height:10px;color:#0c0c0c;letter-spacing:0.362px;-webkit-text-stroke:0.6px #0c0c0c;">AZ</span>
<span class="t" style="left:130.00px;top:350px;font-size:8.5px;line-height:10px;height:10px;color:#0c0c0c;letter-spacing:0.236px;-webkit-text-stroke:0.6px #0c0c0c;">ELEV</span>
<span class="t" style="left:198.00px;top:350px;font-size:8.5px;line-height:10px;height:10px;color:#0c0c0c;letter-spacing:1.214px;-webkit-text-stroke:0.6px #0c0c0c;">C/No</span>
<span class="t" style="left:267.00px;top:350px;font-size:8.5px;line-height:10px;height:10px;color:#0c0c0c;letter-spacing:0.682px;-webkit-text-stroke:0.6px #0c0c0c;">STATUS</span>
<span class="t" style="left:44.80px;top:350px;font-size:8.3px;line-height:10px;height:10px;color:#2a2a2a;letter-spacing:0.407px;-webkit-text-stroke:0.2px #2a2a2a;">---</span>
<span class="t" style="left:101.80px;top:350px;font-size:8.3px;line-height:10px;height:10px;color:#2a2a2a;letter-spacing:0.407px;-webkit-text-stroke:0.2px #2a2a2a;">---</span>
<span class="t" style="left:170.30px;top:350px;font-size:8.3px;line-height:10px;height:10px;color:#2a2a2a;letter-spacing:0.407px;-webkit-text-stroke:0.2px #2a2a2a;">---</span>
<span class="t" style="left:238.60px;top:350px;font-size:8.3px;line-height:10px;height:10px;color:#2a2a2a;letter-spacing:0.407px;-webkit-text-stroke:0.2px #2a2a2a;">---</span>
<span class="t" style="left:349.30px;top:351px;font-size:6.4px;line-height:8px;height:8px;color:#2a2a2a;letter-spacing:0.280px;-webkit-text-stroke:0.15px #2a2a2a;">No SV</span>
<span class="t" style="left:439.10px;top:50px;font-size:5.15px;line-height:6px;height:6px;color:#5a5f66;letter-spacing:-0.185px;">Latitude</span>
<span class="t" style="left:479.00px;top:50px;font-size:5.15px;line-height:6px;height:6px;color:#161616;letter-spacing:-0.134px;">50.60900238°</span>
<span class="t" style="left:530.50px;top:50px;font-size:5.15px;line-height:6px;height:6px;color:#5a5f66;letter-spacing:-0.305px;">+/-</span>
<span class="t" style="left:544.10px;top:50px;font-size:5.15px;line-height:6px;height:6px;color:#161616;letter-spacing:-0.106px;">244.33m</span>
<span class="t" style="left:439.10px;top:59px;font-size:5.15px;line-height:6px;height:6px;color:#5a5f66;letter-spacing:-0.152px;">Longitude</span>
<span class="t" style="left:479.00px;top:59px;font-size:5.15px;line-height:6px;height:6px;color:#161616;letter-spacing:-0.120px;">3.13724846°</span>
<span class="t" style="left:530.50px;top:59px;font-size:5.15px;line-height:6px;height:6px;color:#5a5f66;letter-spacing:-0.305px;">+/-</span>
<span class="t" style="left:544.10px;top:59px;font-size:5.15px;line-height:6px;height:6px;color:#161616;letter-spacing:-0.021px;">9.30m</span>
<span class="t" style="left:439.10px;top:67px;font-size:5.15px;line-height:6px;height:6px;color:#5a5f66;letter-spacing:-0.071px;">Hgt. (MSL)</span>
<span class="t" style="left:479.00px;top:67px;font-size:5.15px;line-height:6px;height:6px;color:#161616;letter-spacing:-0.116px;">122.801m</span>
<span class="t" style="left:530.50px;top:67px;font-size:5.15px;line-height:6px;height:6px;color:#5a5f66;letter-spacing:-0.305px;">+/-</span>
<span class="t" style="left:544.10px;top:67px;font-size:5.15px;line-height:6px;height:6px;color:#161616;letter-spacing:-0.106px;">280.84m</span>
<span class="t" style="left:439.10px;top:82px;font-size:5.15px;line-height:6px;height:6px;color:#5a5f66;letter-spacing:-0.102px;">Solution type</span>
<span class="t" style="left:496.00px;top:82px;font-size:5.15px;line-height:6px;height:6px;color:#161616;letter-spacing:-0.146px;">Single</span>
<span class="t" style="left:439.10px;top:91px;font-size:5.15px;line-height:6px;height:6px;color:#5a5f66;letter-spacing:-0.114px;">Iono correction</span>
<span class="t" style="left:496.00px;top:91px;font-size:5.15px;line-height:6px;height:6px;color:#161616;letter-spacing:-0.163px;">Multi-frequency</span>
<span class="t" style="left:439.10px;top:99px;font-size:5.15px;line-height:6px;height:6px;color:#5a5f66;letter-spacing:-0.159px;">Advanced RTK status</span>
<span class="t" style="left:496.00px;top:99px;font-size:5.15px;line-height:6px;height:6px;color:#161616;letter-spacing:-0.005px;">N/A</span>
<span class="t" style="left:439.10px;top:108px;font-size:5.15px;line-height:6px;height:6px;color:#5a5f66;letter-spacing:-0.110px;">Solution age</span>
<span class="t" style="left:496.00px;top:108px;font-size:5.15px;line-height:6px;height:6px;color:#161616;letter-spacing:-0.254px;">0 second</span>
<span class="t" style="left:439.10px;top:117px;font-size:5.15px;line-height:6px;height:6px;color:#5a5f66;letter-spacing:-0.161px;">Differential age</span>
<span class="t" style="left:496.00px;top:117px;font-size:5.15px;line-height:6px;height:6px;color:#161616;letter-spacing:-0.254px;">0 second</span>
<span class="t" style="left:439.10px;top:133px;font-size:5.15px;line-height:6px;height:6px;color:#5a5f66;letter-spacing:-0.167px;"># of satellites</span>
<span class="t" style="left:496.10px;top:133px;font-size:5.15px;line-height:6px;height:6px;color:#161616;">5</span>
<span class="t" style="left:439.10px;top:141px;font-size:5.15px;line-height:6px;height:6px;color:#5a5f66;letter-spacing:-0.150px;">Used in solution</span>
<span class="t" style="left:495.80px;top:141px;font-size:5px;line-height:6px;height:6px;color:#161616;letter-spacing:-0.282px;">GPS</span>
<span class="t" style="left:495.80px;top:148px;font-size:5px;line-height:6px;height:6px;color:#161616;letter-spacing:-0.259px;">GLO</span>
<span class="t" style="left:516.90px;top:141px;font-size:5px;line-height:6px;height:6px;color:#3ea61c;letter-spacing:-0.167px;-webkit-text-stroke:0.12px #3ea61c;">L1</span>
<span class="t" style="left:525.50px;top:141px;font-size:5px;line-height:6px;height:6px;color:#3ea61c;letter-spacing:-0.167px;-webkit-text-stroke:0.12px #3ea61c;">L2</span>
<span class="t" style="left:534.90px;top:141px;font-size:5px;line-height:6px;height:6px;color:#b0b4b8;letter-spacing:-0.167px;">L5</span>
<span class="t" style="left:516.90px;top:148px;font-size:5px;line-height:6px;height:6px;color:#3ea61c;letter-spacing:-0.167px;-webkit-text-stroke:0.12px #3ea61c;">L1</span>
<span class="t" style="left:525.50px;top:148px;font-size:5px;line-height:6px;height:6px;color:#3ea61c;letter-spacing:-0.167px;-webkit-text-stroke:0.12px #3ea61c;">L2</span>
<span class="t" style="left:439.10px;top:182px;font-size:5.15px;line-height:6px;height:6px;color:#5a5f66;letter-spacing:-0.103px;">Solution status</span>
<span class="t" style="left:496.00px;top:182px;font-size:5.15px;line-height:6px;height:6px;color:#161616;letter-spacing:-0.179px;">Computed</span>
<span class="t" style="left:462.50px;top:196px;font-size:5.15px;line-height:6px;height:6px;color:#161616;letter-spacing:-0.059px;">Wed 06/01/2016 15:40:55 GMT</span>
<span class="t" style="left:461.50px;top:201px;font-size:5.15px;line-height:6px;height:6px;color:#161616;letter-spacing:-0.064px;">Wed 06/01/2016 16:40:55 Local</span>
<span class="t l" style="left:731.60px;top:176px;font-size:5.2px;line-height:6px;height:6px;color:#d8dce2;letter-spacing:0.301px;">5.00 m</span>
<span class="t" style="left:650.40px;top:195px;font-size:5.15px;line-height:6px;height:6px;color:#5a5f66;letter-spacing:-0.494px;">Lat.</span>
<span class="t" style="left:650.40px;top:203px;font-size:5.15px;line-height:6px;height:6px;color:#5a5f66;letter-spacing:-0.475px;">Long.</span>
<span class="t" style="left:681.00px;top:195px;font-size:5.15px;line-height:6px;height:6px;color:#161616;letter-spacing:-0.202px;">50.60900238° ±244.328m</span>
<span class="t" style="left:685.00px;top:203px;font-size:5.15px;line-height:6px;height:6px;color:#161616;letter-spacing:-0.134px;">3.13724846° ±9.298m</span>
<span class="t" style="left:452.00px;top:250px;font-size:4.7px;line-height:5px;height:5px;color:#1a1a1a;font-weight:bold;letter-spacing:-0.137px;">Carrier/Noise Ratio (</span>
<span class="t" style="left:507.00px;top:249px;font-size:4.9px;line-height:6px;height:6px;color:#8f8f9c;font-weight:bold;letter-spacing:-0.071px;">GPS</span>
<span class="t" style="left:537.20px;top:250px;font-size:4.7px;line-height:5px;height:5px;color:#1a1a1a;font-weight:bold;">)</span>
<span class="t" style="left:432.80px;top:256px;font-size:3.8px;line-height:5px;height:5px;color:#8a8a8a;letter-spacing:-0.235px;">60</span>
<span class="t" style="left:432.80px;top:270px;font-size:3.8px;line-height:5px;height:5px;color:#8a8a8a;letter-spacing:-0.235px;">50</span>
<span class="t" style="left:432.80px;top:285px;font-size:3.8px;line-height:5px;height:5px;color:#8a8a8a;letter-spacing:-0.235px;">40</span>
<span class="t" style="left:432.80px;top:299px;font-size:3.8px;line-height:5px;height:5px;color:#8a8a8a;letter-spacing:-0.235px;">30</span>
<span class="t" style="left:432.80px;top:313px;font-size:3.8px;line-height:5px;height:5px;color:#8a8a8a;letter-spacing:-0.235px;">20</span>
<span class="t" style="left:432.80px;top:327px;font-size:3.8px;line-height:5px;height:5px;color:#8a8a8a;letter-spacing:-0.235px;">10</span>
<span class="t" style="left:435.20px;top:341px;font-size:3.8px;line-height:5px;height:5px;color:#8a8a8a;">0</span>
<span class="t l" style="left:427.00px;top:350px;font-size:3.9px;line-height:5px;height:5px;color:#444;font-weight:bold;letter-spacing:-0.117px;">PRN</span>
<span class="t l" style="left:427.00px;top:358px;font-size:3.9px;line-height:5px;height:5px;color:#444;font-weight:bold;letter-spacing:-0.141px;">Ch.</span>
<span class="t" style="left:442.75px;top:351px;font-size:2.5px;line-height:3px;height:3px;color:#777;letter-spacing:-0.181px;">11</span>
<span class="t" style="left:443.35px;top:358px;font-size:3.1px;line-height:4px;height:4px;color:#5e6e78;">0</span>
<span class="t" style="left:451.96px;top:351px;font-size:2.5px;line-height:3px;height:3px;color:#777;">1</span>
<span class="t" style="left:451.81px;top:358px;font-size:3.1px;line-height:4px;height:4px;color:#5e6e78;">1</span>
<span class="t" style="left:459.67px;top:351px;font-size:2.5px;line-height:3px;height:3px;color:#777;letter-spacing:-0.181px;">28</span>
<span class="t" style="left:460.27px;top:358px;font-size:3.1px;line-height:4px;height:4px;color:#5e6e78;">2</span>
<span class="t" style="left:468.13px;top:351px;font-size:2.5px;line-height:3px;height:3px;color:#777;letter-spacing:-0.181px;">17</span>
<span class="t" style="left:468.73px;top:358px;font-size:3.1px;line-height:4px;height:4px;color:#5e6e78;">3</span>
<span class="t" style="left:476.59px;top:351px;font-size:2.5px;line-height:3px;height:3px;color:#777;letter-spacing:-0.181px;">13</span>
<span class="t" style="left:477.19px;top:358px;font-size:3.1px;line-height:4px;height:4px;color:#5e6e78;">4</span>
<span class="t" style="left:485.80px;top:351px;font-size:2.5px;line-height:3px;height:3px;color:#777;">3</span>
<span class="t" style="left:485.65px;top:358px;font-size:3.1px;line-height:4px;height:4px;color:#5e6e78;">5</span>
<span class="t" style="left:493.51px;top:351px;font-size:2.5px;line-height:3px;height:3px;color:#777;letter-spacing:-0.181px;">22</span>
<span class="t" style="left:494.11px;top:358px;font-size:3.1px;line-height:4px;height:4px;color:#5e6e78;">6</span>
<span class="t" style="left:501.97px;top:351px;font-size:2.5px;line-height:3px;height:3px;color:#777;letter-spacing:-0.181px;">11</span>
<span class="t" style="left:502.57px;top:358px;font-size:3.1px;line-height:4px;height:4px;color:#5e6e78;">7</span>
<span class="t" style="left:511.18px;top:351px;font-size:2.5px;line-height:3px;height:3px;color:#777;">5</span>
<span class="t" style="left:511.03px;top:358px;font-size:3.1px;line-height:4px;height:4px;color:#5e6e78;">8</span>
<span class="t" style="left:519.64px;top:351px;font-size:2.5px;line-height:3px;height:3px;color:#777;">8</span>
<span class="t" style="left:519.49px;top:358px;font-size:3.1px;line-height:4px;height:4px;color:#5e6e78;">9</span>
<span class="t" style="left:527.35px;top:351px;font-size:2.5px;line-height:3px;height:3px;color:#777;letter-spacing:-0.181px;">15</span>
<span class="t" style="left:527.05px;top:358px;font-size:3.1px;line-height:4px;height:4px;color:#5e6e78;letter-spacing:-0.345px;">10</span>
<span class="t" style="left:535.81px;top:351px;font-size:2.5px;line-height:3px;height:3px;color:#777;letter-spacing:-0.181px;">19</span>
<span class="t" style="left:535.51px;top:358px;font-size:3.1px;line-height:4px;height:4px;color:#5e6e78;letter-spacing:-0.345px;">11</span>
<span class="t" style="left:544.27px;top:351px;font-size:2.5px;line-height:3px;height:3px;color:#777;letter-spacing:-0.181px;">30</span>
<span class="t" style="left:543.97px;top:358px;font-size:3.1px;line-height:4px;height:4px;color:#5e6e78;letter-spacing:-0.345px;">12</span>
<span class="t" style="left:553.48px;top:351px;font-size:2.5px;line-height:3px;height:3px;color:#777;">7</span>
<span class="t" style="left:552.43px;top:358px;font-size:3.1px;line-height:4px;height:4px;color:#5e6e78;letter-spacing:-0.345px;">13</span>
<span class="t" style="left:560.89px;top:358px;font-size:3.1px;line-height:4px;height:4px;color:#5e6e78;letter-spacing:-0.345px;">14</span>
<span class="t" style="left:569.35px;top:358px;font-size:3.1px;line-height:4px;height:4px;color:#5e6e78;letter-spacing:-0.345px;">15</span>
<span class="t" style="left:427.00px;top:368px;font-size:3.2px;line-height:4px;height:4px;color:#8a8f94;letter-spacing:-0.142px;">PRN:</span>
<span class="t" style="left:433.60px;top:373px;font-size:4.1px;line-height:5px;height:5px;color:#9aa0a6;letter-spacing:-0.385px;">L1C/A</span>
<span class="t" style="left:452.00px;top:373px;font-size:4.1px;line-height:5px;height:5px;color:#9aa0a6;letter-spacing:-0.299px;">49.03 dB·Hz</span>
<span class="t" style="left:433.60px;top:380px;font-size:4.1px;line-height:5px;height:5px;color:#9aa0a6;letter-spacing:-0.334px;">L2P(Y)</span>
<span class="t" style="left:452.00px;top:380px;font-size:4.1px;line-height:5px;height:5px;color:#9aa0a6;letter-spacing:-0.299px;">33.79 dB·Hz</span>
<span class="t" style="left:547.00px;top:372px;font-size:4.4px;line-height:5px;height:5px;color:#303030;letter-spacing:-0.150px;-webkit-text-stroke:0.1px #303030;">Good (&gt; 45)</span>
<span class="t" style="left:544.40px;top:378px;font-size:4.4px;line-height:5px;height:5px;color:#303030;letter-spacing:-0.235px;-webkit-text-stroke:0.1px #303030;">Average(&gt;35)</span>
<span class="t" style="left:549.00px;top:385px;font-size:4.4px;line-height:5px;height:5px;color:#303030;letter-spacing:-0.023px;-webkit-text-stroke:0.1px #303030;">Poor (&lt;35)</span>
<span class="t s" style="left:637.60px;top:235px;font-size:6.2px;line-height:7px;height:7px;color:#333;letter-spacing:-0.350px;">100</span>
<span class="t s" style="left:637.60px;top:254px;font-size:6.2px;line-height:7px;height:7px;color:#333;letter-spacing:-0.600px;">50</span>
<span class="t s" style="left:637.60px;top:277px;font-size:6.2px;line-height:7px;height:7px;color:#333;letter-spacing:-0.600px;">20</span>
<span class="t s" style="left:637.60px;top:294px;font-size:6.2px;line-height:7px;height:7px;color:#333;letter-spacing:-0.600px;">10</span>
<span class="t s" style="left:637.60px;top:310px;font-size:6.2px;line-height:7px;height:7px;color:#333;">5</span>
<span class="t s" style="left:637.60px;top:328px;font-size:6.2px;line-height:7px;height:7px;color:#333;">2</span>
<span class="t s" style="left:637.60px;top:339px;font-size:6.2px;line-height:7px;height:7px;color:#333;">1</span>
<span class="t" style="left:641.70px;top:376px;font-size:4.8px;line-height:5px;height:5px;color:#c41c2c;font-weight:bold;letter-spacing:-0.133px;">HDOP</span>
<span class="t" style="left:642.60px;top:382px;font-size:5px;line-height:6px;height:6px;color:#1a1a1a;letter-spacing:-0.229px;-webkit-text-stroke:0.12px #1a1a1a;">5.913</span>
<span class="t" style="left:669.12px;top:376px;font-size:4.8px;line-height:5px;height:5px;color:#1c7eb0;font-weight:bold;letter-spacing:0.033px;">PDOP</span>
<span class="t" style="left:670.02px;top:382px;font-size:5px;line-height:6px;height:6px;color:#1a1a1a;letter-spacing:-0.229px;-webkit-text-stroke:0.12px #1a1a1a;">8.438</span>
<span class="t" style="left:696.54px;top:376px;font-size:4.8px;line-height:5px;height:5px;color:#6e9410;font-weight:bold;letter-spacing:-0.033px;">VDOP</span>
<span class="t" style="left:697.44px;top:382px;font-size:5px;line-height:6px;height:6px;color:#1a1a1a;letter-spacing:-0.229px;-webkit-text-stroke:0.12px #1a1a1a;">6.020</span>
<span class="t" style="left:723.96px;top:376px;font-size:4.8px;line-height:5px;height:5px;color:#801c9e;font-weight:bold;letter-spacing:0.114px;">TDOP</span>
<span class="t" style="left:724.86px;top:382px;font-size:5px;line-height:6px;height:6px;color:#1a1a1a;letter-spacing:-0.229px;-webkit-text-stroke:0.12px #1a1a1a;">6.269</span>
<span class="t" style="left:751.38px;top:376px;font-size:4.8px;line-height:5px;height:5px;color:#a47e22;font-weight:bold;letter-spacing:-0.108px;">GDOP</span>
<span class="t" style="left:750.78px;top:382px;font-size:5px;line-height:6px;height:6px;color:#1a1a1a;letter-spacing:-0.219px;-webkit-text-stroke:0.12px #1a1a1a;">10.512</span>
</div>
</body>
</html>
